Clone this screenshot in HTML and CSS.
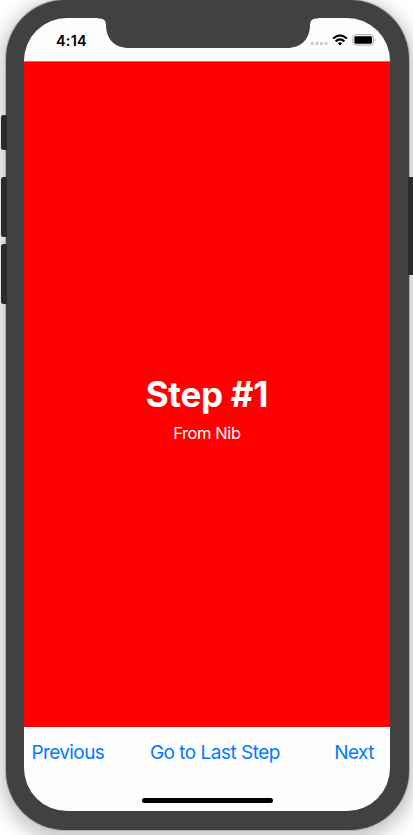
FILE: index.html
```html
<!DOCTYPE html>
<html lang="en">
<head>
<meta charset="utf-8">
<title>Step #1</title>
<link rel="stylesheet" href="styles.css">
</head>
<body>
<div class="stage">
  <i class="key key-mute"></i>
  <i class="key key-up"></i>
  <i class="key key-down"></i>
  <i class="key key-power"></i>
  <div class="phone">
    <div class="screen">
      <header class="status">
        <span class="clock">4:14</span>
        <svg class="indicators" width="67" height="14" viewBox="0 0 67 14">
          <g fill="#c9c9c9"><rect x="0.8" y="8" width="3" height="3" rx=".8"/><rect x="5.4" y="8" width="3" height="3" rx=".8"/><rect x="10" y="8" width="3" height="3" rx=".8"/><rect x="14.6" y="8" width="3" height="3" rx=".8"/></g>
          <g fill="none" stroke="#000" stroke-width="2.1"><path d="M23.1 4.6Q30 -1.8 36.9 4.6"/><path d="M25.6 7.4Q30 3.4 34.4 7.4"/></g>
          <path d="M27.8 9.2Q30 7.4 32.2 9.2L30 11.5Z"/>
          <rect x="42.9" y=".7" width="20.6" height="10.4" rx="3" fill="none" stroke="#aaa"/>
          <rect x="44.4" y="2.2" width="17.6" height="7.5" rx="1.4"/>
          <path d="M64.9 4.3Q66.5 6 64.9 7.8Z" fill="#999"/>
        </svg>
      </header>
      <main class="step">
        <h1>Step #1</h1>
        <p>From Nib</p>
      </main>
      <footer class="toolbar">
        <nav>
          <a class="previous">Previous</a>
          <a class="last">Go to Last Step</a>
          <a class="next">Next</a>
        </nav>
        <div class="home"></div>
      </footer>
    </div>
    <svg class="notch" width="220" height="32" viewBox="0 0 220 32"><path d="M0 0V1.5H2Q8 1.5 8 8C8 22 17 31 31 31H189C203 31 212 22 212 8Q212 1.5 218 1.5H220V0Z" fill="#414141"/></svg>
  </div>
</div>
</body>
</html>
```
FILE: styles.css
```css
* { box-sizing: border-box; }
body {
  margin: 0;
  background: #fff;
  font-family: Inter, "Liberation Sans", sans-serif;
}
.stage {
  position: relative;
  width: 413px;
  height: 835px;
  overflow: hidden;
  padding-left: 6px;
}
.phone {
  position: relative;
  width: 403px;
  height: 830px;
  padding: 18.4px 18.4px 19px;
  border-radius: 59px;
  background: #414141;
  box-shadow: 0 0 0 1px #b0b0b0, 0 5px 18px 6px rgba(0, 0, 0, .22);
}
.screen {
  display: flex;
  flex-direction: column;
  width: 366px;
  height: 792.6px;
  overflow: hidden;
  border-radius: 43px;
  background: #fdfdfd;
}
.notch {
  position: absolute;
  left: 92px;
  top: 17px;
}
.status {
  display: flex;
  justify-content: space-between;
  height: 43px;
  padding: 15px 13.4px 0 31.6px;
  flex: none;
}
.clock {
  font-size: 14.5px;
  line-height: 16px;
  font-weight: 600;
  letter-spacing: .2px;
}
.indicators { display: block; margin-top: 1px; }
.step {
  display: flex;
  flex-direction: column;
  align-items: center;
  height: 665.6px;
  flex: none;
  padding: 310px 1px 0 0;
  border-top: 1px solid #dc7070;
  background: #f00;
  background-clip: padding-box;
  color: #fff;
}
h1 {
  margin: 0;
  font-size: 35px;
  line-height: 44px;
  font-weight: 700;
  letter-spacing: -.3px;
}
p {
  margin: 6px 0 0;
  font-size: 16.5px;
  line-height: 22px;
  letter-spacing: -.4px;
}
.toolbar {
  display: flex;
  flex-direction: column;
  align-items: center;
  flex: 1;
}
nav {
  display: flex;
  width: 100%;
  padding: 13px 16.5px 0 7px;
  color: #007aff;
  font-size: 19px;
  line-height: 25px;
  white-space: nowrap;
}
.previous { width: 118.5px; letter-spacing: -.6px; }
.last { letter-spacing: -.5px; }
.next { margin-left: auto; letter-spacing: -.6px; }
.home {
  width: 131px;
  height: 5px;
  margin-top: 33px;
  border-radius: 3px;
  background: #000;
}
.key {
  position: absolute;
  left: .5px;
  width: 6.5px;
  border-radius: 2.5px 1px 1px 2.5px;
  background: #2a2a2a;
  z-index: 1;
}
.key-mute { top: 115px; height: 35px; }
.key-up { top: 177px; height: 60px; }
.key-down { top: 244px; height: 60px; }
.key-power { top: 177px; left: 408px; height: 98px; border-radius: 0; }
```
